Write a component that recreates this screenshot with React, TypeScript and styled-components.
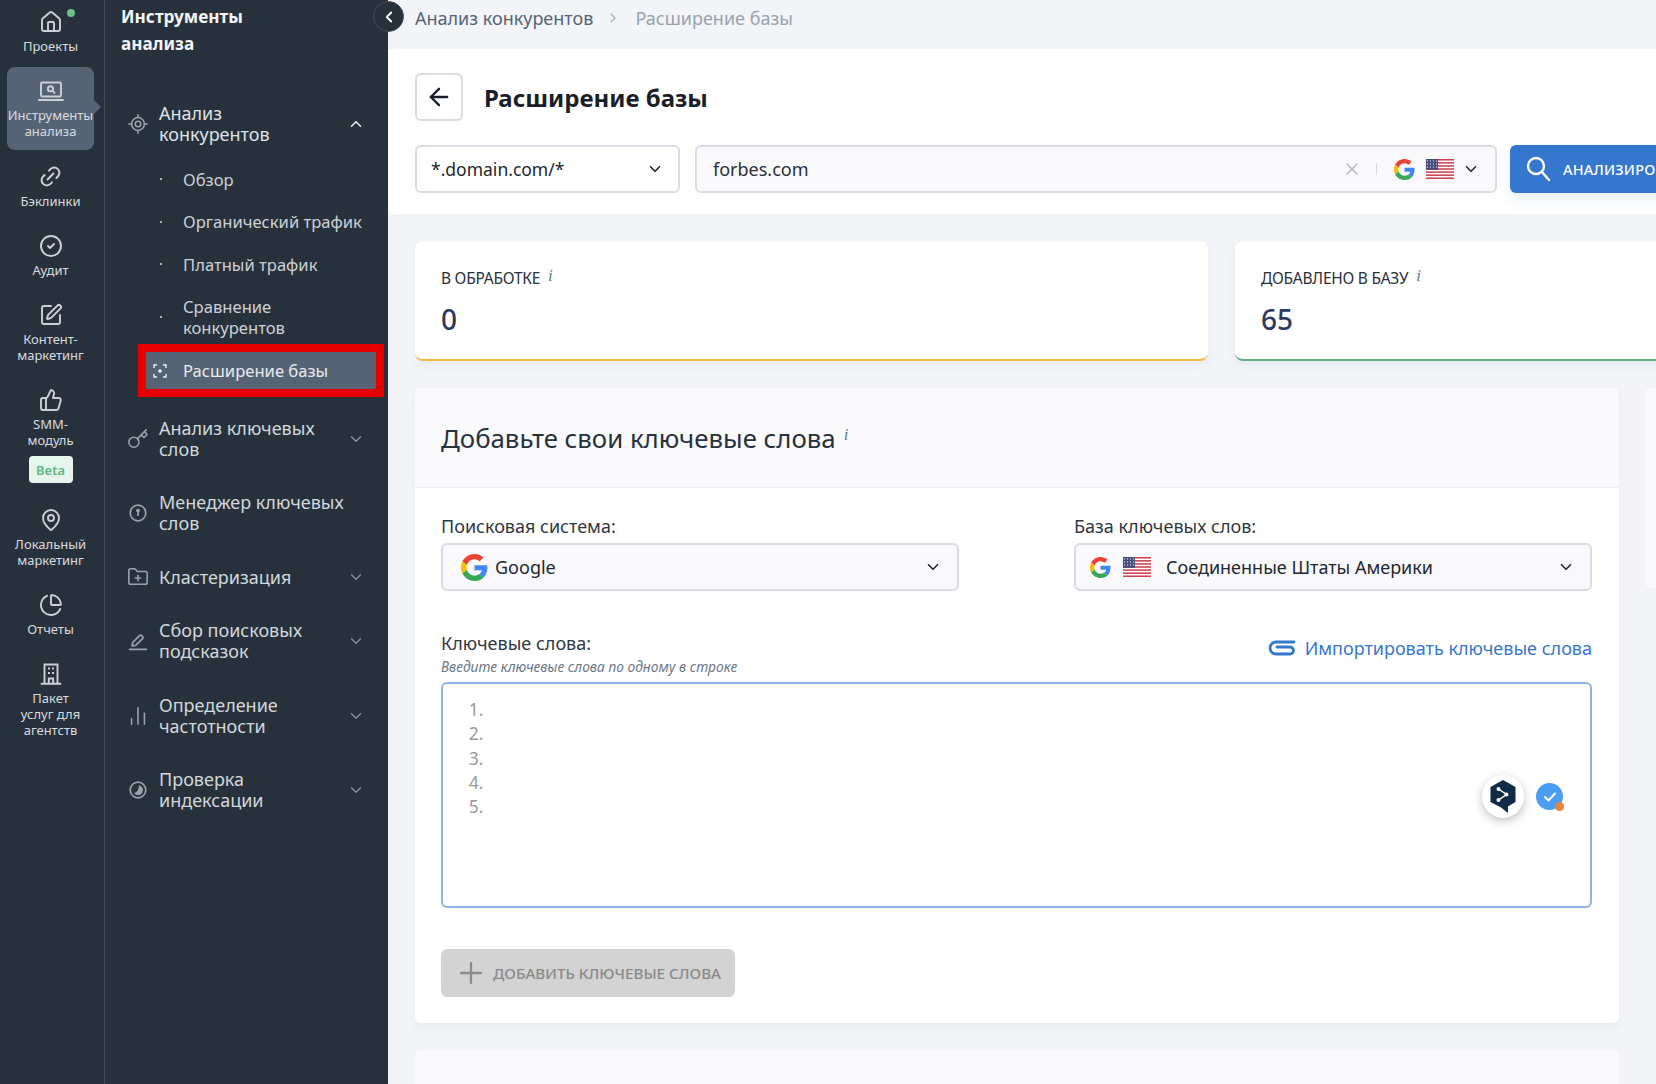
import React from "react";
import styled, { createGlobalStyle } from "styled-components";
import {
  ArrowLeft, ChartNoAxesColumn, ChartPie, ChevronDown, ChevronLeft, ChevronRight, ChevronUp,
  CircleCheck, FolderPlus, House, Key, Link2, LocateFixed, MapPin, Plus, SquarePen, ThumbsUp, X,
} from "lucide-react";

const FONT = `"Noto Sans", "Open Sans", sans-serif`;

const Global = createGlobalStyle`
  html, body { margin: 0; padding: 0; height: 1084px; overflow: hidden; background: #f2f4f8; }
  body { font-family: ${FONT}; }
  * { box-sizing: border-box; }
`;

const Page = styled.div`
  display: flex;
  width: 1656px;
  height: 1084px;
  overflow: hidden;
  position: relative;
`;

/* ---------- rail ---------- */
const Rail = styled.nav`
  width: 105px;
  flex: none;
  background: #27313c;
  border-right: 1px solid #434d58;
  padding: 0 10px 0 7px;
  display: flex;
  flex-direction: column;
  gap: 2px;
`;
const RailEntry = styled.div<{ $active?: boolean; $first?: boolean }>`
  position: relative;
  width: 87px;
  display: flex;
  flex-direction: column;
  align-items: center;
  padding: ${(p) => (p.$first ? "10px" : "12px")} 0 11px;
  border-radius: 8px;
  background: ${(p) => (p.$active ? "#566374" : "transparent")};
  color: #d8dbdf;
  svg { color: #ccd0d5; flex: none; }
  ${(p) =>
    p.$active
      ? `&::after { content: ""; position: absolute; right: -7px; top: 33px; border-left: 7px solid #566374; border-top: 7px solid transparent; border-bottom: 7px solid transparent; }`
      : ""}
`;
const RailLabel = styled.span`
  margin-top: 4px;
  font-size: 13px;
  line-height: 16px;
  text-align: center;
  white-space: pre-line;
`;
const Beta = styled.span`
  margin-top: 8px;
  width: 44px;
  height: 27px;
  border-radius: 4px;
  background: #e6f6ec;
  color: #5fb583;
  font-size: 13px;
  font-weight: 600;
  display: flex;
  align-items: center;
  justify-content: center;
`;
const OnlineDot = styled.i`
  position: absolute;
  left: 60px;
  top: 9px;
  width: 8px;
  height: 8px;
  border-radius: 50%;
  background: #6fbf8b;
`;

/* ---------- sidebar ---------- */
const Sidebar = styled.aside`
  width: 283px;
  flex: none;
  background: #27313c;
  padding: 3px 0 0 16px;
  display: flex;
  flex-direction: column;
`;
const SideTitle = styled.div`
  font-size: 17.2px;
  font-weight: 700;
  line-height: 27px;
  color: #f4f5f6;
  white-space: pre-line;
  margin-bottom: 46px;
`;
const NavList = styled.div`
  display: flex;
  flex-direction: column;
  gap: 32.5px;
`;
const NavHead = styled.div<{ $open?: boolean }>`
  display: flex;
  align-items: center;
  color: ${(p) => (p.$open ? "#dfe2e5" : "#d3d7db")};
  & > svg:first-child { color: #9aa3ad; flex: none; width: 22px; height: 22px; margin: -1px 0 -1px 6px; }
  & > svg:last-child { flex: none; margin-left: auto; margin-right: 23px; color: ${(p) => (p.$open ? "#eceef0" : "#8e98a3")}; }
`;
const NavText = styled.span`
  margin-left: 10px;
  width: 192px;
  font-size: 18px;
  line-height: 21px;
  white-space: pre-line;
`;
const SubMenu = styled.div`
  margin: 13px 0 -7px;
  display: flex;
  flex-direction: column;
`;
const SubItem = styled.div`
  display: flex;
  align-items: center;
  padding: 10.75px 0 10.75px 39px;
  color: #ccd0d5;
  font-size: 16.6px;
  line-height: 21px;
`;
const SubDot = styled.i`
  width: 2px;
  height: 2px;
  background: #aab1b9;
  flex: none;
  margin-right: 21px;
`;
const SubActive = styled.div`
  display: flex;
  align-items: center;
  height: 37px;
  margin: 3px 12px 3px 25px;
  padding-left: 7px;
  background: #566374;
  outline: 8px solid #e40000;
  color: #e8eaec;
  font-size: 16.6px;
  position: relative;
  svg { flex: none; margin-right: 16px; }
`;
const Collapse = styled.button`
  position: absolute;
  left: 373px;
  top: 1px;
  width: 31px;
  height: 31px;
  border-radius: 50%;
  border: 1px solid #434d58;
  padding: 0;
  background: #27313c;
  color: #fff;
  display: flex;
  align-items: center;
  justify-content: center;
`;

/* ---------- main ---------- */
const Main = styled.main`
  flex: 1;
  min-width: 0;
  overflow: hidden;
  background: #f2f4f8;
`;
const Crumbs = styled.div`
  height: 49px;
  padding: 0 0 13px 27px;
  display: flex;
  align-items: center;
  font-size: 18px;
  color: #566374;
  svg { color: #a3abb5; margin: 0 14px 0 12px; }
`;
const CrumbLast = styled.span`
  color: #98a2ad;
`;
const Header = styled.header`
  height: 165px;
  background: #fff;
  padding: 24px 0 0 27px;
`;
const TitleRow = styled.div`
  display: flex;
  align-items: center;
  gap: 21px;
  height: 48px;
`;
const BackButton = styled.button`
  width: 48px;
  height: 48px;
  border: 2px solid #d9dce6;
  border-radius: 6px;
  background: #fff;
  color: #1a1f2b;
  padding: 0;
  display: flex;
  align-items: center;
  justify-content: center;
`;
const PageTitle = styled.h1`
  margin: 0;
  font-size: 24px;
  font-weight: 700;
  color: #191e29;
`;
const Filters = styled.div`
  margin-top: 24px;
  display: flex;
  width: 1400px;
`;
const DomainSelect = styled.div`
  width: 265px;
  height: 48px;
  flex: none;
  border: 2px solid #d9dce6;
  border-radius: 6px;
  background: #fff;
  display: flex;
  align-items: center;
  justify-content: space-between;
  padding: 0 14px;
  font-size: 17.5px;
  color: #22272f;
`;
const SearchBox = styled.div`
  width: 802px;
  height: 48px;
  flex: none;
  margin-left: 15px;
  border: 2px solid #d9dce6;
  border-radius: 6px;
  background: #f9f9fc;
  display: flex;
  align-items: center;
  padding: 0 15px 0 16px;
  font-size: 18px;
  color: #2a2f38;
`;
const SearchValue = styled.span`
  flex: 1;
`;
const Divider = styled.i`
  width: 1px;
  height: 12px;
  background: #d6d9e0;
  margin: 0 17px 0 14px;
`;
const ClearIcon = styled(X)`
  color: #b0b3bd;
`;
const FlagSlot = styled.span<{ $left: number; $right: number }>`
  display: flex;
  flex: none;
  margin: 0 ${(p) => p.$right}px 0 ${(p) => p.$left}px;
`;
const AnalyzeButton = styled.button`
  flex: none;
  width: 200px;
  height: 48px;
  margin-left: 13px;
  border: 0;
  border-radius: 6px;
  background: #3577ce;
  box-shadow: 0 6px 12px rgba(53, 119, 206, 0.12);
  color: #fff;
  display: flex;
  align-items: center;
  gap: 12px;
  padding: 0 16px;
  font: 500 14.5px ${FONT};
  letter-spacing: 0.2px;
  white-space: nowrap;
`;
const StatsRow = styled.section`
  margin: 27px 0 0 27px;
  display: flex;
  gap: 27px;
  width: 1400px;
`;
const StatCard = styled.div<{ $accent: string; $wide?: boolean }>`
  flex: ${(p) => (p.$wide ? "1" : "0 0 793px")};
  height: 120px;
  background: #fff;
  border-radius: 8px;
  border-bottom: 2px solid ${(p) => p.$accent};
  box-shadow: 0 4px 10px rgba(40, 50, 80, 0.05);
  padding: 26px 26px 0;
`;
const StatLabel = styled.div`
  font-size: 15.5px;
  line-height: 22px;
  color: #2a2f38;
  text-transform: uppercase;
  letter-spacing: -0.25px;
`;
const Info = styled.i`
  font: italic 500 17px "Liberation Serif", serif;
  text-transform: none;
  color: #5f7f95;
  margin-left: 8px;
  position: relative;
  top: -3px;
`;
const StatValue = styled.div`
  margin-top: 12px;
  font-size: 28px;
  line-height: 36px;
  font-weight: 500;
  color: #2d3a5e;
`;
const PanelsRow = styled.div`
  margin: 27px 0 0 27px;
  width: 1400px;
  display: grid;
  grid-template-columns: 1204px 200px;
  gap: 27px 26px;
`;
const Panel = styled.section`
  background: #fff;
  border-radius: 6px;
  box-shadow: 0 4px 10px rgba(40, 50, 80, 0.05);
  height: 635px;
  overflow: hidden;
`;
const GhostPanel = styled.div`
  background: #fafafc;
  border-radius: 6px;
  height: 200px;
`;
const PanelHead = styled.div`
  height: 100px;
  background: #fafafc;
  border-bottom: 1px solid #eceef3;
  padding: 0 26px;
  display: flex;
  align-items: center;
  font-size: 25.8px;
  color: #27313c;
`;
const PanelBody = styled.div`
  padding: 26px 27px 0 26px;
`;
const Columns = styled.div`
  display: grid;
  grid-template-columns: 518px 518px;
  gap: 115px;
`;
const FieldLabel = styled.div`
  font-size: 18px;
  line-height: 24px;
  margin-bottom: 5px;
  color: #2f3842;
`;
const PickBox = styled.div<{ $pad: number }>`
  height: 48px;
  border: 2px solid #d9dce6;
  border-radius: 6px;
  background: #f9f9fc;
  display: flex;
  align-items: center;
  padding: 0 15px 0 ${(p) => p.$pad}px;
  font-size: 18px;
  color: #22272f;
`;
const PickText = styled.span<{ $gap: number }>`
  flex: 1;
  margin-left: ${(p) => p.$gap}px;
`;
const KeywordHead = styled.div`
  margin-top: 40px;
  display: flex;
  justify-content: space-between;
  align-items: flex-start;
`;
const Hint = styled.div`
  margin-top: -2px;
  font-size: 13.8px;
  font-style: italic;
  line-height: 18px;
  color: #6d7785;
`;
const ImportLink = styled.a`
  margin-top: 5px;
  display: flex;
  align-items: center;
  gap: 9px;
  font-size: 18px;
  line-height: 24px;
  color: #3577ce;
`;
const Editor = styled.div`
  position: relative;
  margin-top: 6px;
  height: 226px;
  border: 2px solid #8fb3e6;
  border-radius: 6px;
  background: #fff;
`;
const Lines = styled.ol`
  margin: 0;
  padding: 13px 0 0 45px;
  font-size: 17.5px;
  line-height: 24.3px;
  color: #999;
`;
const DeepL = styled.span`
  position: absolute;
  right: 66px;
  top: 91px;
  width: 42px;
  height: 43px;
  border-radius: 50%;
  background: #fff;
  box-shadow: 0 3px 10px rgba(0, 0, 0, 0.25);
  display: flex;
  align-items: center;
  justify-content: center;
`;
const Grammar = styled.span`
  position: absolute;
  right: 27px;
  top: 99px;
  width: 27px;
  height: 27px;
  border-radius: 50%;
  background: #4a9df5;
  color: #fff;
  display: flex;
  align-items: center;
  justify-content: center;
  &::after {
    content: "";
    position: absolute;
    right: -1px;
    bottom: -1px;
    width: 9px;
    height: 9px;
    border-radius: 50%;
    background: #e8833a;
  }
`;
const AddButton = styled.button`
  margin-top: 41px;
  width: 294px;
  height: 48px;
  border: 0;
  border-radius: 6px;
  background: #d3d3d3;
  color: #8a8a8a;
  display: flex;
  align-items: center;
  gap: 5px;
  padding: 0 13px;
  font: 500 15.2px ${FONT};
  white-space: nowrap;
  text-transform: uppercase;
`;

/* ---------- drawings ---------- */
const GoogleG = ({ size }: { size: number }) => (
  <svg width={size} height={size} viewBox="0 0 48 48">
    <path fill="#EA4335" d="M24 9.5c3.54 0 6.71 1.22 9.21 3.6l6.85-6.85C35.9 2.38 30.47 0 24 0 14.62 0 6.51 5.38 2.56 13.22l7.98 6.19C12.43 13.72 17.74 9.5 24 9.5z" />
    <path fill="#4285F4" d="M46.98 24.55c0-1.57-.15-3.09-.38-4.55H24v9.02h12.94c-.58 2.96-2.26 5.48-4.78 7.18l7.73 6c4.51-4.18 7.09-10.36 7.09-17.65z" />
    <path fill="#FBBC05" d="M10.53 28.59c-.48-1.45-.76-2.99-.76-4.59s.27-3.14.76-4.59l-7.98-6.19C.92 16.46 0 20.12 0 24c0 3.88.92 7.54 2.56 10.78l7.97-6.19z" />
    <path fill="#34A853" d="M24 48c6.48 0 11.93-2.13 15.89-5.81l-7.73-6c-2.15 1.45-4.92 2.3-8.16 2.3-6.26 0-11.57-4.22-13.47-9.91l-7.98 6.19C6.51 42.62 14.62 48 24 48z" />
  </svg>
);

const UsFlag = () => (
  <svg width="28" height="20" viewBox="0 0 28 20">
    <rect width="28" height="20" rx="1.5" fill="#fff" />
    {[0, 3.08, 6.16, 9.24, 12.32, 15.4, 18.46].map((y) => (
      <rect key={y} y={y} width="28" height="1.54" fill="#cf3f4f" />
    ))}
    <rect width="12" height="10.8" fill="#454a78" />
    {[2, 5, 8].map((y) =>
      [1.5, 4.5, 7.5, 10.5].map((x) => <circle key={`${x}-${y}`} cx={x} cy={y} r="0.7" fill="#cfd2e2" />)
    )}
  </svg>
);

const Magnifier = () => (
  <svg width="25" height="26" viewBox="0 0 25 26" fill="none" stroke="#fff" strokeWidth="2.4" strokeLinecap="round">
    <circle cx="10" cy="10" r="8" />
    <path d="M16 16l7 8" />
  </svg>
);

const LaptopSearch = () => (
  <svg width="26" height="24" viewBox="0 0 26 24" fill="none" stroke="currentColor" strokeWidth="1.9">
    <rect x="3" y="3.5" width="20" height="14" rx="1.2" />
    <path d="M1 21h24" strokeLinecap="round" />
    <circle cx="12.5" cy="9.8" r="2.6" />
    <path d="M14.5 11.8l2 2" strokeLinecap="round" />
  </svg>
);

const Office = () => (
  <svg width="24" height="24" viewBox="0 0 24 24" fill="none" stroke="currentColor" strokeWidth="1.9">
    <path d="M5.5 21.5V2.5h13v19" />
    <path d="M2.5 21.8h19" strokeLinecap="round" />
    <path d="M9.8 21.5v-5h4.4v5" />
    <path d="M9 6.5h2M13 6.5h2M9 11h2M13 11h2" strokeWidth="2" />
  </svg>
);

const KeyholeCircle = () => (
  <svg width="22" height="22" viewBox="0 0 22 22" fill="none" stroke="currentColor" strokeWidth="1.7">
    <circle cx="11" cy="11" r="7.8" />
    <circle cx="11" cy="8.6" r="1.1" fill="currentColor" />
    <path d="M11 9v5" />
  </svg>
);

const IndexCircle = () => (
  <svg width="22" height="22" viewBox="0 0 22 22" fill="none" stroke="currentColor" strokeWidth="1.7">
    <circle cx="11" cy="11" r="7.8" />
    <path d="M11.8 6.2a5 5 0 1 1-5 7.6c2.9.3 5.3-3.2 5-7.6z" fill="currentColor" stroke="none" />
  </svg>
);

const PencilLine = () => (
  <svg width="22" height="22" viewBox="0 0 22 22" fill="none" stroke="currentColor" strokeWidth="1.7" strokeLinejoin="round" strokeLinecap="round">
    <path d="M5 16l.8-3.6L12.6 5.6a1.4 1.4 0 0 1 2 0l1 1a1.4 1.4 0 0 1 0 2L8.7 15.3z" />
    <path d="M2.5 19.3h17" />
  </svg>
);

const ScanPlusIcon = () => (
  <svg width="14" height="14" viewBox="0 0 14 14" fill="none" stroke="#f2f3f5" strokeWidth="1.3">
    <path d="M1 4V1h3M10 1h3v3M13 10v3h-3M4 13H1v-3" />
    <path d="M7 5v4M5 7h4" />
  </svg>
);

const Clip = () => (
  <svg width="28" height="18" viewBox="0 0 28 18" fill="none" stroke="#3577ce" strokeWidth="2.8" strokeLinecap="round">
    <path d="M26 3H8a6 6 0 0 0 0 12H22a3.5 3.5 0 0 0 0-7H9" />
  </svg>
);

const DeepLMark = () => (
  <svg width="26" height="33" viewBox="0 0 26 33">
    <path d="M13 0l12.5 7v15L18 26.5V33l-7-5.5L.5 22V7z" fill="#0f2b46" />
    <path d="M8.5 9l8 5.5-8 5.5" fill="none" stroke="#fff" strokeWidth="1.5" />
    <circle cx="8.5" cy="9" r="2" fill="#fff" />
    <circle cx="16.5" cy="14.5" r="2" fill="#fff" />
    <circle cx="8.5" cy="20" r="2" fill="#fff" />
  </svg>
);

const GrammarCheck = () => (
  <svg width="14" height="12" viewBox="0 0 14 12" fill="none" stroke="#fff" strokeWidth="2" strokeLinecap="round" strokeLinejoin="round">
    <path d="M2 6l3.5 3.5L12 2.5" />
  </svg>
);

/* ---------- data ---------- */
const rail = [
  { icon: <House size={24} strokeWidth={1.9} />, label: "Проекты", first: true, dot: true },
  { icon: <LaptopSearch />, label: "Инструменты\nанализа", active: true },
  { icon: <Link2 size={25} strokeWidth={1.9} transform="rotate(-45)" />, label: "Бэклинки" },
  { icon: <CircleCheck size={24} strokeWidth={1.9} />, label: "Аудит" },
  { icon: <SquarePen size={24} strokeWidth={1.9} />, label: "Контент-\nмаркетинг" },
  { icon: <ThumbsUp size={24} strokeWidth={1.9} />, label: "SMM-\nмодуль", beta: true },
  { icon: <MapPin size={24} strokeWidth={1.9} />, label: "Локальный\nмаркетинг" },
  { icon: <ChartPie size={24} strokeWidth={1.9} />, label: "Отчеты" },
  { icon: <Office />, label: "Пакет\nуслуг для\nагентств" },
];

const groups = [
  { icon: <Key size={22} strokeWidth={1.7} />, label: "Анализ ключевых\nслов", chevron: true },
  { icon: <KeyholeCircle />, label: "Менеджер ключевых\nслов", chevron: false },
  { icon: <FolderPlus size={22} strokeWidth={1.7} />, label: "Кластеризация", chevron: true },
  { icon: <PencilLine />, label: "Сбор поисковых\nподсказок", chevron: true },
  { icon: <ChartNoAxesColumn size={22} strokeWidth={1.7} />, label: "Определение\nчастотности", chevron: true },
  { icon: <IndexCircle />, label: "Проверка\nиндексации", chevron: true },
];

export default function App() {
  return (
    <Page>
      <Global />
      <Rail>
        {rail.map((r) => (
          <RailEntry key={r.label} $active={r.active} $first={r.first}>
            {r.icon}
            {r.dot && <OnlineDot />}
            <RailLabel>{r.label}</RailLabel>
            {r.beta && <Beta>Beta</Beta>}
          </RailEntry>
        ))}
      </Rail>
      <Sidebar>
        <SideTitle>{"Инструменты\nанализа"}</SideTitle>
        <NavList>
          <div>
            <NavHead $open>
              <LocateFixed strokeWidth={1.7} />
              <NavText>{"Анализ\nконкурентов"}</NavText>
              <ChevronUp size={18} strokeWidth={2} />
            </NavHead>
            <SubMenu>
              <SubItem><SubDot />Обзор</SubItem>
              <SubItem><SubDot />Органический трафик</SubItem>
              <SubItem><SubDot />Платный трафик</SubItem>
              <SubItem><SubDot /><span>Сравнение<br />конкурентов</span></SubItem>
              <SubActive><ScanPlusIcon />Расширение базы</SubActive>
            </SubMenu>
          </div>
          {groups.map((g) => (
            <NavHead key={g.label}>
              {g.icon}
              <NavText>{g.label}</NavText>
              {g.chevron && <ChevronDown size={18} strokeWidth={1.6} />}
            </NavHead>
          ))}
        </NavList>
      </Sidebar>
      <Collapse aria-label="Свернуть"><ChevronLeft size={18} strokeWidth={2.4} /></Collapse>
      <Main>
        <Crumbs>
          <span>Анализ конкурентов</span>
          <ChevronRight size={16} strokeWidth={1.6} />
          <CrumbLast>Расширение базы</CrumbLast>
        </Crumbs>
        <Header>
          <TitleRow>
            <BackButton aria-label="Назад"><ArrowLeft size={28} strokeWidth={2} /></BackButton>
            <PageTitle>Расширение базы</PageTitle>
          </TitleRow>
          <Filters>
            <DomainSelect>*.domain.com/*<ChevronDown size={18} strokeWidth={2.2} /></DomainSelect>
            <SearchBox>
              <SearchValue>forbes.com</SearchValue>
              <ClearIcon size={20} strokeWidth={1.6} />
              <Divider />
              <GoogleG size={21} />
              <FlagSlot $left={11} $right={8}><UsFlag /></FlagSlot>
              <ChevronDown size={18} strokeWidth={2.2} />
            </SearchBox>
            <AnalyzeButton><Magnifier />АНАЛИЗИРОВАТЬ</AnalyzeButton>
          </Filters>
        </Header>
        <StatsRow>
          <StatCard $accent="#f5b83d">
            <StatLabel>В обработке<Info>i</Info></StatLabel>
            <StatValue>0</StatValue>
          </StatCard>
          <StatCard $accent="#5fb07f" $wide>
            <StatLabel>Добавлено в базу<Info>i</Info></StatLabel>
            <StatValue>65</StatValue>
          </StatCard>
        </StatsRow>
        <PanelsRow>
          <Panel>
            <PanelHead>Добавьте свои ключевые слова<Info>i</Info></PanelHead>
            <PanelBody>
              <Columns>
                <div>
                  <FieldLabel>Поисковая система:</FieldLabel>
                  <PickBox $pad={18}>
                    <GoogleG size={27} />
                    <PickText $gap={7}>Google</PickText>
                    <ChevronDown size={18} strokeWidth={2.2} />
                  </PickBox>
                </div>
                <div>
                  <FieldLabel>База ключевых слов:</FieldLabel>
                  <PickBox $pad={14}>
                    <GoogleG size={21} />
                    <FlagSlot $left={12} $right={0}><UsFlag /></FlagSlot>
                    <PickText $gap={15}>Соединенные Штаты Америки</PickText>
                    <ChevronDown size={18} strokeWidth={2.2} />
                  </PickBox>
                </div>
              </Columns>
              <KeywordHead>
                <div>
                  <FieldLabel>Ключевые слова:</FieldLabel>
                  <Hint>Введите ключевые слова по одному в строке</Hint>
                </div>
                <ImportLink><Clip />Импортировать ключевые слова</ImportLink>
              </KeywordHead>
              <Editor>
                <Lines>
                  <li /><li /><li /><li /><li />
                </Lines>
                <DeepL><DeepLMark /></DeepL>
                <Grammar><GrammarCheck /></Grammar>
              </Editor>
              <AddButton><Plus size={34} strokeWidth={1.6} />Добавить ключевые слова</AddButton>
            </PanelBody>
          </Panel>
          <GhostPanel />
          <GhostPanel />
        </PanelsRow>
      </Main>
    </Page>
  );
}
